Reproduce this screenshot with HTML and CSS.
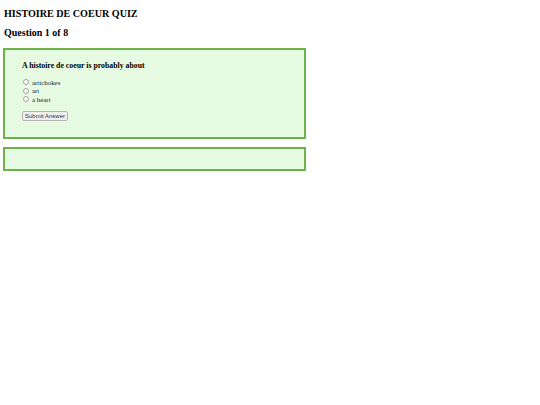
FILE: index.html
```
<!DOCTYPE html>
<html>
<head>
<meta charset="utf-8">
<link rel="stylesheet" href="styles.css">
</head>
<body>
<h1 class="title">HISTOIRE DE COEUR QUIZ</h1>
<h2 class="progress">Question 1 of 8</h2>
<div class="box quiz">
  <h3 class="question">A histoire de coeur is probably about</h3>
  <div class="options">
    <label class="option"><input type="radio" name="a" class="radio"><span>artichokes</span></label>
    <label class="option"><input type="radio" name="a" class="radio"><span>art</span></label>
    <label class="option"><input type="radio" name="a" class="radio"><span>a heart</span></label>
  </div>
  <button class="submit">Submit Answer</button>
</div>
<div class="box result"></div>
</body>
</html>
```
FILE: styles.css
```
html, body {
  margin: 0;
  padding: 0;
  background: #ffffff;
}
body {
  font-family: "Liberation Serif", "Times New Roman", serif;
  color: #000;
  padding: 0 3px;
}
.title {
  font-size: 10.1px;
  font-weight: bold;
  line-height: 12px;
  margin: 8px 0 0 1px;
}
.progress {
  font-size: 10px;
  font-weight: bold;
  line-height: 12px;
  margin: 7px 0 0 1px;
}
.box {
  width: 299px;
  border: 2px solid #6cb34a;
  background: #e6fbe1;
  box-sizing: content-box;
}
.quiz {
  margin-top: 9px;
  padding: 11px 17px 16px 17px;
  width: 265px;
}
.question {
  font-size: 7.8px;
  font-weight: bold;
  line-height: 10px;
  margin: 0;
}
.options {
  display: flex;
  flex-direction: column;
  margin-top: 7px;
}
.option {
  display: flex;
  align-items: center;
  height: 8.5px;
  font-size: 6.9px;
  color: #222;
}
.radio {
  -webkit-appearance: none;
  appearance: none;
  width: 6px;
  height: 6px;
  margin: 0 3px 0 1px;
  padding: 0;
  border: 1px solid #a0a0a0;
  border-radius: 50%;
  background: #fff;
  box-sizing: border-box;
}
.submit {
  margin-top: 7px;
  height: 10px;
  padding: 0 2px;
  font-family: "Liberation Sans", Arial, sans-serif;
  font-size: 6px;
  line-height: 8px;
  color: #333;
  background: #efefef;
  border: 1px solid #b3b3b3;
  border-radius: 2px;
  display: block;
}
.result {
  margin-top: 8px;
  height: 20px;
}
```
